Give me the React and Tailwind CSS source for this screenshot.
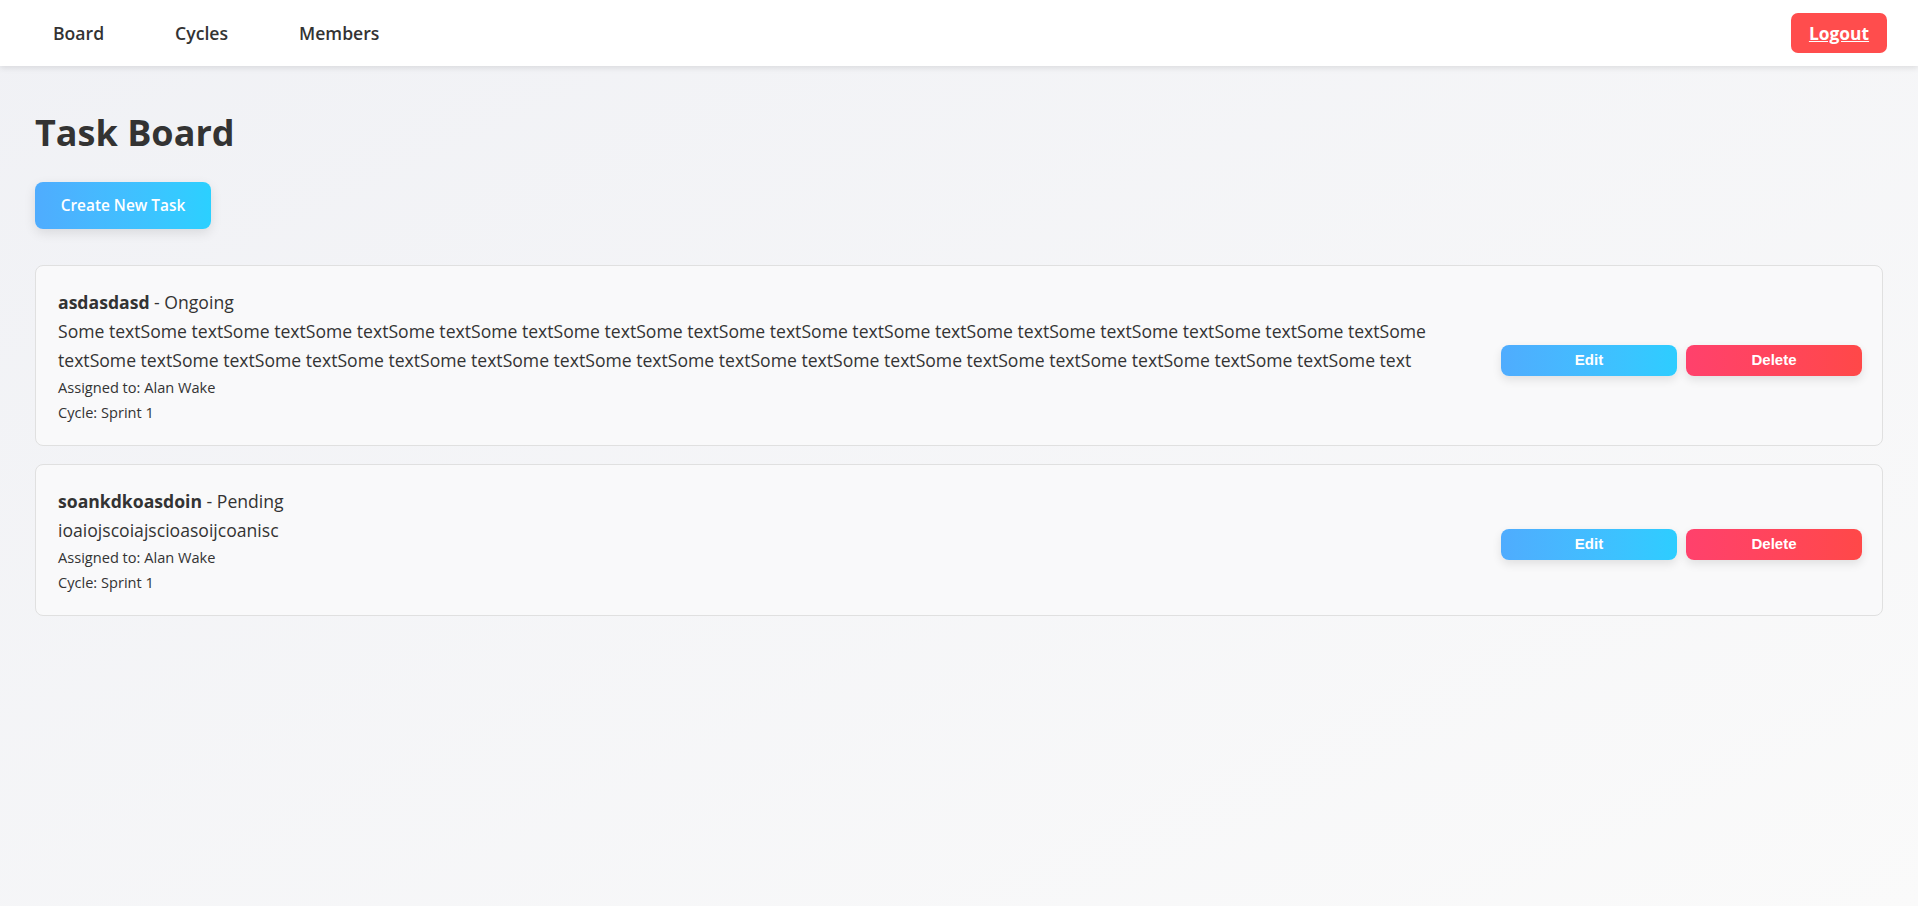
import React from "react";

const desc = "Some text".repeat(33);

function TaskCard({ title, status, description }) {
  return (
    <div className="flex items-center gap-[20px] rounded-[8px] border border-[#e0e0e0] bg-[#f9f9fa] pl-[22px] pr-[20px] pt-[19px] pb-[20px]">
      <div className="min-w-0 flex-1">
        <p className="mt-[3px] text-[17.6px] leading-[29px]">
          <span className="font-bold">{title}</span> - {status}
        </p>
        <p className="text-[17.6px] leading-[29px]">{description}</p>
        <p className="text-[14.6px] leading-[25px]">Assigned to: Alan Wake</p>
        <p className="text-[14.6px] leading-[25px]">Cycle: Sprint 1</p>
      </div>
      <div className="flex shrink-0 gap-[9px] pt-[10px] font-['Liberation_Sans',Arial,sans-serif]">
        <button className="h-[31px] w-[176px] rounded-[8px] bg-linear-to-r from-[#4facfe] to-[#2dcdff] text-[15px] font-bold text-white shadow-[0_4px_10px_rgba(0,0,0,0.1)]">
          Edit
        </button>
        <button className="h-[31px] w-[176px] rounded-[8px] bg-linear-to-r from-[#ff416c] to-[#ff4848] text-[15px] font-bold text-white shadow-[0_4px_10px_rgba(0,0,0,0.1)]">
          Delete
        </button>
      </div>
    </div>
  );
}

export default function App() {
  return (
    <div className="min-h-screen bg-linear-to-br from-[#f0f1f5] to-[#fafafa] font-['Segoe_UI','Open_Sans',sans-serif] text-[#333]">
      <nav className="flex h-[66px] items-center justify-between bg-white pl-[53px] pr-[31px] shadow-[0_2px_6px_rgba(0,0,0,0.1)]">
        <div className="flex gap-[71px] text-[17.6px] font-semibold text-[#333]">
          <a>Board</a>
          <a>Cycles</a>
          <a>Members</a>
        </div>
        <button className="h-[40px] w-[96px] rounded-[7px] bg-[#ff4d4d] text-[17.4px] font-bold text-white underline">
          Logout
        </button>
      </nav>
      <main className="px-[35px]">
        <h1 className="mt-[45px] text-[36px] font-bold leading-[44px]">Task Board</h1>
        <button className="mt-[27px] h-[47px] w-[176px] rounded-[8px] bg-linear-to-r from-[#4facfe] to-[#2bd0ff] text-[15.4px] font-semibold text-white shadow-[0_4px_12px_rgba(0,0,0,0.1)]">
          Create New Task
        </button>
        <div className="mt-[36px] flex flex-col gap-[18px]">
          <TaskCard title="asdasdasd" status="Ongoing" description={desc} />
          <TaskCard title="soankdkoasdoin" status="Pending" description="ioaiojscoiajscioasoijcoanisc" />
        </div>
      </main>
    </div>
  );
}
